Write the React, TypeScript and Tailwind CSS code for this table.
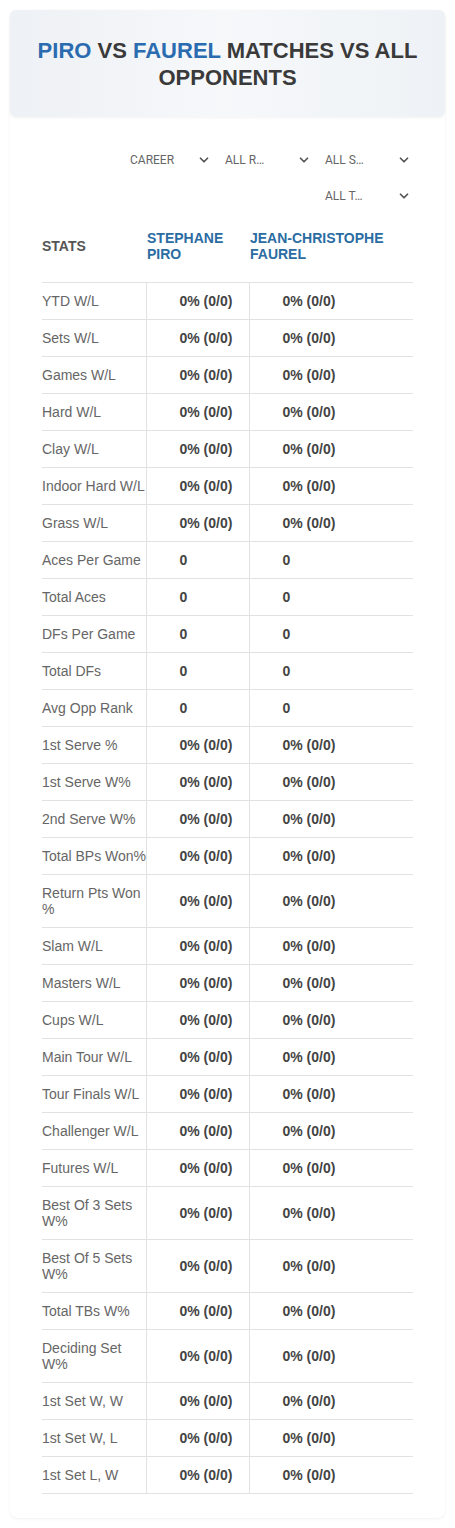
import { ChevronDown } from "lucide-react";

const pct = "0% (0/0)";

const rows: [string, string][] = [
  ["YTD W/L", pct],
  ["Sets W/L", pct],
  ["Games W/L", pct],
  ["Hard W/L", pct],
  ["Clay W/L", pct],
  ["Indoor Hard W/L", pct],
  ["Grass W/L", pct],
  ["Aces Per Game", "0"],
  ["Total Aces", "0"],
  ["DFs Per Game", "0"],
  ["Total DFs", "0"],
  ["Avg Opp Rank", "0"],
  ["1st Serve %", pct],
  ["1st Serve W%", pct],
  ["2nd Serve W%", pct],
  ["Total BPs Won%", pct],
  ["Return Pts Won %", pct],
  ["Slam W/L", pct],
  ["Masters W/L", pct],
  ["Cups W/L", pct],
  ["Main Tour W/L", pct],
  ["Tour Finals W/L", pct],
  ["Challenger W/L", pct],
  ["Futures W/L", pct],
  ["Best Of 3 Sets W%", pct],
  ["Best Of 5 Sets W%", pct],
  ["Total TBs W%", pct],
  ["Deciding Set W%", pct],
  ["1st Set W, W", pct],
  ["1st Set W, L", pct],
  ["1st Set L, W", pct],
];

const filters = ["CAREER", "ALL R...", "ALL S...", "ALL T..."];

const Select = ({ label, first }: { label: string; first?: boolean }) => (
  <div
    className={`${first ? "w-[83px]" : "w-[88px]"} h-[36px] flex items-center justify-between pr-[2px] text-[12px] text-[#666] font-['Roboto',sans-serif]`}
  >
    <span>{label.replace("...", "…")}</span>
    <ChevronDown size={14} strokeWidth={3} className="text-[#555]" />
  </div>
);

const App = () => {
  return (
    <div className="min-h-screen bg-white pt-[10px] font-['Liberation_Sans',Arial,sans-serif]">
      <div className="mx-[10px] rounded-[8px] bg-white shadow-[0_1px_3px_rgba(0,0,0,0.06)] pb-[24px]">
        {/* header */}
        <div className="rounded-[6px] bg-gradient-to-r from-[#eef1f5] via-[#f6f8fa] to-[#eef2f6] shadow-[0_1px_3px_rgba(0,0,0,0.05)] px-[20px] pt-[27px] pb-[26px] text-center">
          <h1 className="text-[22px] leading-[27px] font-bold text-[#3a3a3a] uppercase">
            <span className="text-[#2b6cb0]">Piro</span> vs{" "}
            <span className="text-[#2b6cb0]">Faurel</span> matches vs all opponents
          </h1>
        </div>

        <div className="px-[32px]">
          {/* filters */}
          <div className="mt-[25px] flex flex-wrap justify-end gap-x-[12px]">
            {filters.map((f, i) => (
              <Select key={f} label={f} first={i === 0} />
            ))}
          </div>

          {/* stats table */}
          <table className="w-full table-fixed border-collapse mt-[14px] text-[14px] leading-[16px]">
            <colgroup>
              <col className="w-[104px]" />
              <col className="w-[103px]" />
              <col />
            </colgroup>
            <thead>
              <tr className="border-b border-[#e2e2e2]">
                <th className="text-left align-middle font-bold text-[#555] pt-[2px] pb-[20px]">STATS</th>
                <th className="text-left align-middle font-bold text-[#2b6ca3] pl-[1px] pt-[2px] pb-[20px]">
                  STEPHANE
                  <br />
                  PIRO
                </th>
                <th className="text-left align-middle font-bold text-[#2b6ca3] pl-[1px] pt-[2px] pb-[20px]">
                  JEAN-CHRISTOPHE
                  <br />
                  FAUREL
                </th>
              </tr>
            </thead>
            <tbody>
              {rows.map(([label, value]) => (
                <tr key={label} className="border-b border-[#e2e2e2]">
                  <td
                    className={`py-[10px] pr-0 text-[#666] align-middle ${label === "Total BPs Won%" ? "whitespace-nowrap" : ""}`}
                  >
                    {label}
                  </td>
                  <td className="py-[10px] pl-[33px] border-l border-[#e2e2e2] font-bold text-[#444] align-middle">
                    {value}
                  </td>
                  <td className="py-[10px] pl-[33px] border-l border-[#e2e2e2] font-bold text-[#444] align-middle">
                    {value}
                  </td>
                </tr>
              ))}
            </tbody>
          </table>
        </div>
      </div>
    </div>
  );
};

export default App;
